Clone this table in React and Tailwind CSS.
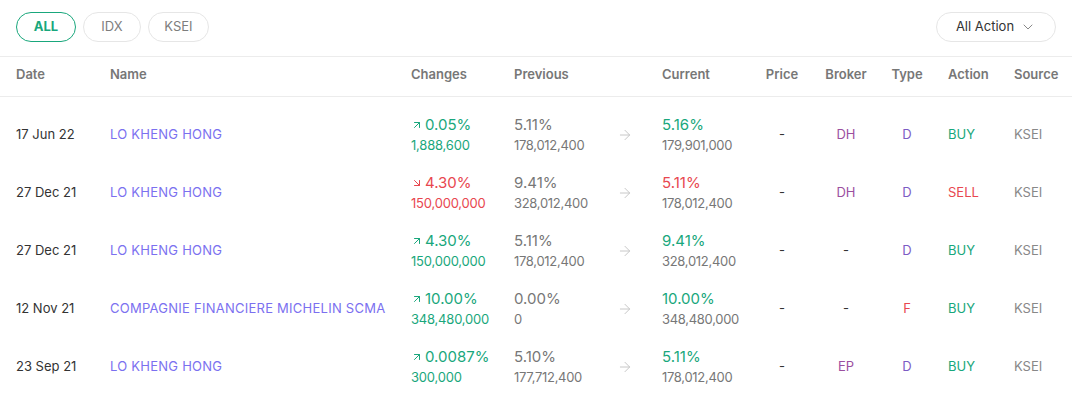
import { ArrowUpRight, ArrowDownRight, ArrowRight, ChevronDown } from "lucide-react";

const rows = [
  { date: "17 Jun 22", name: "LO KHENG HONG", up: true, change: "0.05%", changeVol: "1,888,600", prev: "5.11%", prevVol: "178,012,400", cur: "5.16%", curVol: "179,901,000", price: "-", broker: "DH", type: "D", action: "BUY", source: "KSEI" },
  { date: "27 Dec 21", name: "LO KHENG HONG", up: false, change: "4.30%", changeVol: "150,000,000", prev: "9.41%", prevVol: "328,012,400", cur: "5.11%", curVol: "178,012,400", price: "-", broker: "DH", type: "D", action: "SELL", source: "KSEI" },
  { date: "27 Dec 21", name: "LO KHENG HONG", up: true, change: "4.30%", changeVol: "150,000,000", prev: "5.11%", prevVol: "178,012,400", cur: "9.41%", curVol: "328,012,400", price: "-", broker: "-", type: "D", action: "BUY", source: "KSEI" },
  { date: "12 Nov 21", name: "COMPAGNIE FINANCIERE MICHELIN SCMA", up: true, change: "10.00%", changeVol: "348,480,000", prev: "0.00%", prevVol: "0", cur: "10.00%", curVol: "348,480,000", price: "-", broker: "-", type: "F", action: "BUY", source: "KSEI" },
  { date: "23 Sep 21", name: "LO KHENG HONG", up: true, change: "0.0087%", changeVol: "300,000", prev: "5.10%", prevVol: "177,712,400", cur: "5.11%", curVol: "178,012,400", price: "-", broker: "EP", type: "D", action: "BUY", source: "KSEI" },
];

function Tab({ label, active, width }) {
  return (
    <button
      className={
        active
          ? `h-[30px] ${width} rounded-full border border-[#19a77c] text-[#19a77c] font-bold text-[13px]`
          : `h-[30px] ${width} rounded-full border border-[#e6e6e6] text-[#7d7d7d] text-[13px]`
      }
    >
      {label}
    </button>
  );
}

export default function App() {
  return (
    <div className="w-[1072px] h-[403px] bg-white overflow-hidden text-[13px] text-[#333]" style={{ fontFamily: "Inter, 'Liberation Sans', sans-serif" }}>
      {/* Filters */}
      <div className="flex items-center justify-between px-4 pt-3 pb-[14px] border-b border-[#ececec]">
        <div className="flex items-center gap-[7px]">
          <Tab label="ALL" active width="w-[60px]" />
          <Tab label="IDX" width="w-[58px]" />
          <Tab label="KSEI" width="w-[61px]" />
        </div>
        <button className="h-[30px] w-[120px] rounded-full border border-[#e6e6e6] flex items-center justify-center gap-[6px] text-[13px] text-[#333]">
          All Action
          <ChevronDown className="w-4 h-4 text-[#888]" strokeWidth={1.5} />
        </button>
      </div>

      {/* Header */}
      <div className="flex items-center h-10 pb-[3px] px-4 border-b border-[#ececec] font-semibold text-[#777]">
        <div className="w-[94px]">Date</div>
        <div className="w-[301px]">Name</div>
        <div className="w-[103px]">Changes</div>
        <div className="w-[86px]">Previous</div>
        <div className="w-[50px]"></div>
        <div className="w-[107px] pl-3">Current</div>
        <div className="w-[50px] text-center">Price</div>
        <div className="w-[78px] text-center">Broker</div>
        <div className="w-[44px] text-center">Type</div>
        <div className="w-[85px] pl-[19px]">Action</div>
        <div className="w-[42px]">Source</div>
      </div>

      {/* Rows */}
      <div className="pt-[9px]">
        {rows.map((r, i) => {
          const color = r.up ? "text-[#19a77c]" : "text-[#e8474f]";
          return (
            <div key={i} className="flex items-center h-[58px] px-4">
              <div className="w-[94px] text-[#333]">{r.date}</div>
              <div className="w-[301px] text-[#7b70f0] tracking-[0.25px]">{r.name}</div>
              <div className={`w-[103px] ${color}`}>
                <div className="flex items-center gap-[2px] text-[15px] leading-5">
                  {r.up ? (
                    <ArrowUpRight className="w-3 h-3" strokeWidth={2} />
                  ) : (
                    <ArrowDownRight className="w-3 h-3" strokeWidth={2} />
                  )}
                  {r.change}
                </div>
                <div className="leading-5 tracking-[-0.2px]">{r.changeVol}</div>
              </div>
              <div className="w-[86px] text-[#777]">
                <div className="text-[15px] leading-5">{r.prev}</div>
                <div className="leading-5 tracking-[-0.3px]">{r.prevVol}</div>
              </div>
              <div className="w-[50px] flex justify-center text-[#c8c8c8]">
                <ArrowRight className="w-4 h-4" strokeWidth={1.5} />
              </div>
              <div className="w-[107px] pl-3">
                <div className={`text-[15px] leading-5 ${color}`}>{r.cur}</div>
                <div className="leading-5 text-[#777] tracking-[-0.3px]">{r.curVol}</div>
              </div>
              <div className="w-[50px] text-center text-[#333]">{r.price}</div>
              <div className={`w-[78px] text-center ${r.broker === "-" ? "text-[#333]" : "text-[#9b4f9f]"}`}>{r.broker}</div>
              <div className={`w-[44px] text-center ${r.type === "F" ? "text-[#e8474f]" : "text-[#7c5cc4]"}`}>{r.type}</div>
              <div className={`w-[85px] pl-[19px] ${r.action === "BUY" ? "text-[#19a77c]" : "text-[#e8474f]"}`}>{r.action}</div>
              <div className="w-[42px] text-[#888]">{r.source}</div>
            </div>
          );
        })}
      </div>
    </div>
  );
}
